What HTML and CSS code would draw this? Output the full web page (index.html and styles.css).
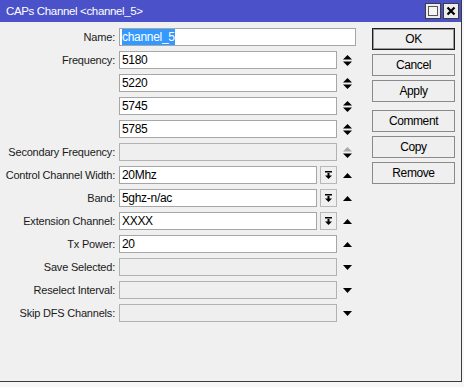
FILE: index.html
```html
<!DOCTYPE html>
<html lang="en">
<head>
    <meta charset="UTF-8">
    <title>CAPs Channel</title>
    <link rel="stylesheet" href="styles.css">
</head>
<body>
    <div class="window">
        <div class="titlebar">
            <span class="title">CAPs Channel &lt;channel_5&gt;</span>
            <div class="title-btns">
                <span class="tbtn"><span class="max-box"></span></span>
                <span class="tbtn">
                    <svg width="10" height="10" viewBox="0 0 10 10"><path d="M1.5 1.5 L8.5 8.5 M8.5 1.5 L1.5 8.5" stroke="#000" stroke-width="2.2"/></svg>
                </span>
            </div>
        </div>
        <div class="body">
            <div class="form">
                <div class="row">
                    <span class="label">Name:</span>
                    <div class="field wide"><span class="sel">channel_5</span></div>
                </div>
                <div class="row">
                    <span class="label">Frequency:</span>
                    <div class="field">5180</div>
                    <span class="icon"><svg width="9" height="11" viewBox="0 0 9 11"><path d="M0 4.5 L4.5 0 L9 4.5 Z" fill="#000"/><path d="M0 6.5 L9 6.5 L4.5 11 Z" fill="#000"/></svg></span>
                </div>
                <div class="row">
                    <span class="label"></span>
                    <div class="field">5220</div>
                    <span class="icon"><svg width="9" height="11" viewBox="0 0 9 11"><path d="M0 4.5 L4.5 0 L9 4.5 Z" fill="#000"/><path d="M0 6.5 L9 6.5 L4.5 11 Z" fill="#000"/></svg></span>
                </div>
                <div class="row">
                    <span class="label"></span>
                    <div class="field">5745</div>
                    <span class="icon"><svg width="9" height="11" viewBox="0 0 9 11"><path d="M0 4.5 L4.5 0 L9 4.5 Z" fill="#000"/><path d="M0 6.5 L9 6.5 L4.5 11 Z" fill="#000"/></svg></span>
                </div>
                <div class="row">
                    <span class="label"></span>
                    <div class="field">5785</div>
                    <span class="icon"><svg width="9" height="11" viewBox="0 0 9 11"><path d="M0 4.5 L4.5 0 L9 4.5 Z" fill="#000"/><path d="M0 6.5 L9 6.5 L4.5 11 Z" fill="#000"/></svg></span>
                </div>
                <div class="row">
                    <span class="label">Secondary Frequency:</span>
                    <div class="field disabled"></div>
                    <span class="icon"><svg width="9" height="11" viewBox="0 0 9 11"><path d="M0 4.5 L4.5 0 L9 4.5 Z" fill="#a8a8a8"/><path d="M0 6.5 L9 6.5 L4.5 11 Z" fill="#000"/></svg></span>
                </div>
                <div class="row">
                    <span class="label">Control Channel Width:</span>
                    <div class="field short">20Mhz</div>
                    <span class="drop"><svg width="7" height="8" viewBox="0 0 7 8"><rect x="0" y="0" width="7" height="1.5" fill="#000"/><rect x="2.5" y="2" width="2" height="3" fill="#000"/><path d="M0 4.5 L7 4.5 L3.5 8 Z" fill="#000"/></svg></span>
                    <span class="icon"><svg width="9" height="5" viewBox="0 0 9 5"><path d="M0 5 L4.5 0 L9 5 Z" fill="#000"/></svg></span>
                </div>
                <div class="row">
                    <span class="label">Band:</span>
                    <div class="field short">5ghz-n/ac</div>
                    <span class="drop"><svg width="7" height="8" viewBox="0 0 7 8"><rect x="0" y="0" width="7" height="1.5" fill="#000"/><rect x="2.5" y="2" width="2" height="3" fill="#000"/><path d="M0 4.5 L7 4.5 L3.5 8 Z" fill="#000"/></svg></span>
                    <span class="icon"><svg width="9" height="5" viewBox="0 0 9 5"><path d="M0 5 L4.5 0 L9 5 Z" fill="#000"/></svg></span>
                </div>
                <div class="row">
                    <span class="label">Extension Channel:</span>
                    <div class="field short">XXXX</div>
                    <span class="drop"><svg width="7" height="8" viewBox="0 0 7 8"><rect x="0" y="0" width="7" height="1.5" fill="#000"/><rect x="2.5" y="2" width="2" height="3" fill="#000"/><path d="M0 4.5 L7 4.5 L3.5 8 Z" fill="#000"/></svg></span>
                    <span class="icon"><svg width="9" height="5" viewBox="0 0 9 5"><path d="M0 5 L4.5 0 L9 5 Z" fill="#000"/></svg></span>
                </div>
                <div class="row">
                    <span class="label">Tx Power:</span>
                    <div class="field">20</div>
                    <span class="icon"><svg width="9" height="5" viewBox="0 0 9 5"><path d="M0 5 L4.5 0 L9 5 Z" fill="#000"/></svg></span>
                </div>
                <div class="row">
                    <span class="label">Save Selected:</span>
                    <div class="field disabled"></div>
                    <span class="icon"><svg width="9" height="5" viewBox="0 0 9 5"><path d="M0 0 L9 0 L4.5 5 Z" fill="#000"/></svg></span>
                </div>
                <div class="row">
                    <span class="label">Reselect Interval:</span>
                    <div class="field disabled"></div>
                    <span class="icon"><svg width="9" height="5" viewBox="0 0 9 5"><path d="M0 0 L9 0 L4.5 5 Z" fill="#000"/></svg></span>
                </div>
                <div class="row">
                    <span class="label">Skip DFS Channels:</span>
                    <div class="field disabled"></div>
                    <span class="icon"><svg width="9" height="5" viewBox="0 0 9 5"><path d="M0 0 L9 0 L4.5 5 Z" fill="#000"/></svg></span>
                </div>
            </div>
            <div class="buttons">
                <div class="btn default">OK</div>
                <div class="btn">Cancel</div>
                <div class="btn">Apply</div>
                <div class="btn spaced">Comment</div>
                <div class="btn">Copy</div>
                <div class="btn">Remove</div>
            </div>
        </div>
    </div>
</body>
</html>
```

FILE: styles.css
```css
body, html {
    margin: 0;
    padding: 0;
    background-color: #f7f7f7;
    font-family: 'Liberation Sans', Arial, sans-serif;
    font-size: 11px;
    color: #000;
}

.window {
    width: 461px;
    height: 381px;
    background-color: #f0f0f0;
    border-right: 1px solid #3a3a3a;
    border-bottom: 1px solid #3a3a3a;
    display: flex;
    flex-direction: column;
}

.titlebar {
    height: 22px;
    background-color: #4b51c9;
    display: flex;
    align-items: center;
    justify-content: space-between;
    padding: 0 2px 0 6px;
}

.title {
    color: #fff;
    font-size: 11.5px;
    letter-spacing: -0.35px;
}

.title-btns {
    display: flex;
    gap: 2px;
}

.tbtn {
    width: 14px;
    height: 14px;
    background-color: #ececec;
    border: 1px solid #3c3c3c;
    display: flex;
    align-items: center;
    justify-content: center;
}

.max-box {
    width: 8px;
    height: 8px;
    border: 1px solid #555;
    background-color: #f4f4f4;
}

.body {
    display: flex;
    padding-top: 6px;
}

.form {
    display: flex;
    flex-direction: column;
    gap: 5px;
}

.row {
    display: flex;
    align-items: center;
    height: 18px;
}

.label {
    width: 119px;
    box-sizing: border-box;
    padding-right: 4px;
    text-align: right;
    white-space: nowrap;
    letter-spacing: -0.2px;
    color: #1a1a1a;
}

.field {
    width: 218px;
    height: 18px;
    box-sizing: border-box;
    border: 1px solid #a6a6a6;
    background-color: #fff;
    padding-left: 2px;
    font-size: 12px;
    line-height: 16px;
    letter-spacing: -0.3px;
}

.field.wide {
    width: 237px;
}

.field.short {
    width: 198px;
}

.field.disabled {
    background-color: #efefef;
    border-color: #b2b2b2;
}

.sel {
    background-color: #3399ff;
    color: #fff;
    padding: 1px 0;
}

.drop {
    width: 17px;
    height: 18px;
    box-sizing: border-box;
    margin-left: 3px;
    border: 1px solid #b8b8b8;
    background-color: #f0f0f0;
    display: flex;
    align-items: center;
    justify-content: center;
}

.icon {
    width: 20px;
    display: flex;
    justify-content: center;
}

.buttons {
    margin-left: 15px;
    width: 83px;
    display: flex;
    flex-direction: column;
    gap: 4px;
}

.btn {
    height: 22px;
    box-sizing: border-box;
    border: 1px solid #8a8a8a;
    background-color: #efefef;
    text-align: center;
    line-height: 20px;
    font-size: 12px;
    letter-spacing: -0.4px;
}

.btn.default {
    border: 1px solid #1e1e1e;
    box-shadow: inset 0 0 0 1px #9a9a9a;
}

.btn.spaced {
    margin-top: 4px;
}
```
